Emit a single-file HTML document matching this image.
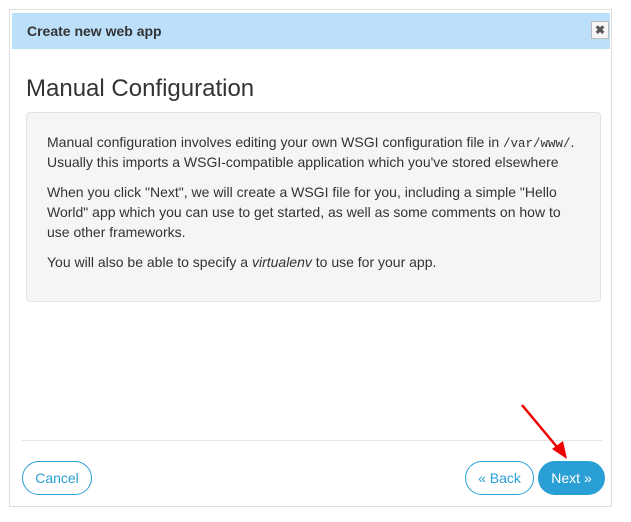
<!DOCTYPE html>
<html><head><style>
body{margin:0;width:631px;height:522px;background:#fff;font-family:"Liberation Sans",sans-serif;position:relative;overflow:hidden}
.box{position:absolute;left:9px;top:9px;width:603px;height:498px;border:1px solid #ddd;box-sizing:border-box}
.hdr{position:absolute;left:12px;top:13px;width:598px;height:36px;background:#bde0fa}
.hdr span{position:absolute;left:15px;top:10px;font-size:14px;font-weight:bold;color:#333}
.x{position:absolute;left:579px;top:8px;width:18px;height:18px;border:1px solid #bbb;background:#f5f5f5;box-sizing:border-box;font-size:12px;font-weight:bold;color:#555;text-align:center;line-height:16px}
h1{position:absolute;left:26px;top:75px;margin:0;font-size:24px;font-weight:normal;color:#333}
.well{position:absolute;left:26px;top:112px;width:575px;height:190px;background:#f5f5f5;border:1px solid #e3e3e3;border-radius:4px;box-sizing:border-box;padding:19px 20px 0 20px;font-size:14px;line-height:20px;color:#333}
.well p{margin:0 0 10px}
code{font-family:"Liberation Mono",monospace;font-size:12.5px;line-height:1}
.line{position:absolute;left:22px;top:440px;width:580px;height:1px;background:#e5e5e5}
.btn{position:absolute;top:461px;height:34px;border:1px solid #2a9fd6;border-radius:17px;box-sizing:border-box;font-size:14px;line-height:32px;text-align:center;color:#2a9fd6;background:#fff}
</style></head><body>
<div class="box"></div>
<div class="hdr"><span>Create new web app</span><div class="x">✖</div></div>
<h1>Manual Configuration</h1>
<div class="well">
<p>Manual configuration involves editing your own WSGI configuration file in <code>/var/www/</code>. Usually this imports a WSGI-compatible application which you've stored elsewhere</p>
<p>When you click "Next", we will create a WSGI file for you, including a simple "Hello World" app which you can use to get started, as well as some comments on how to use other frameworks.</p>
<p>You will also be able to specify a <i>virtualenv</i> to use for your app.</p>
</div>
<div class="line"></div>
<div class="btn" style="left:22px;width:70px">Cancel</div>
<div class="btn" style="left:465px;width:69px">« Back</div>
<div class="btn" style="left:538px;width:67px;background:#2a9fd6;color:#fff">Next »</div>
<svg style="position:absolute;left:0;top:0" width="631" height="522"><line x1="522" y1="405" x2="562" y2="453" stroke="#e00" stroke-width="2.5"/><polygon points="567,459 552,449 563,441" fill="#e00"/></svg>
</body></html>
